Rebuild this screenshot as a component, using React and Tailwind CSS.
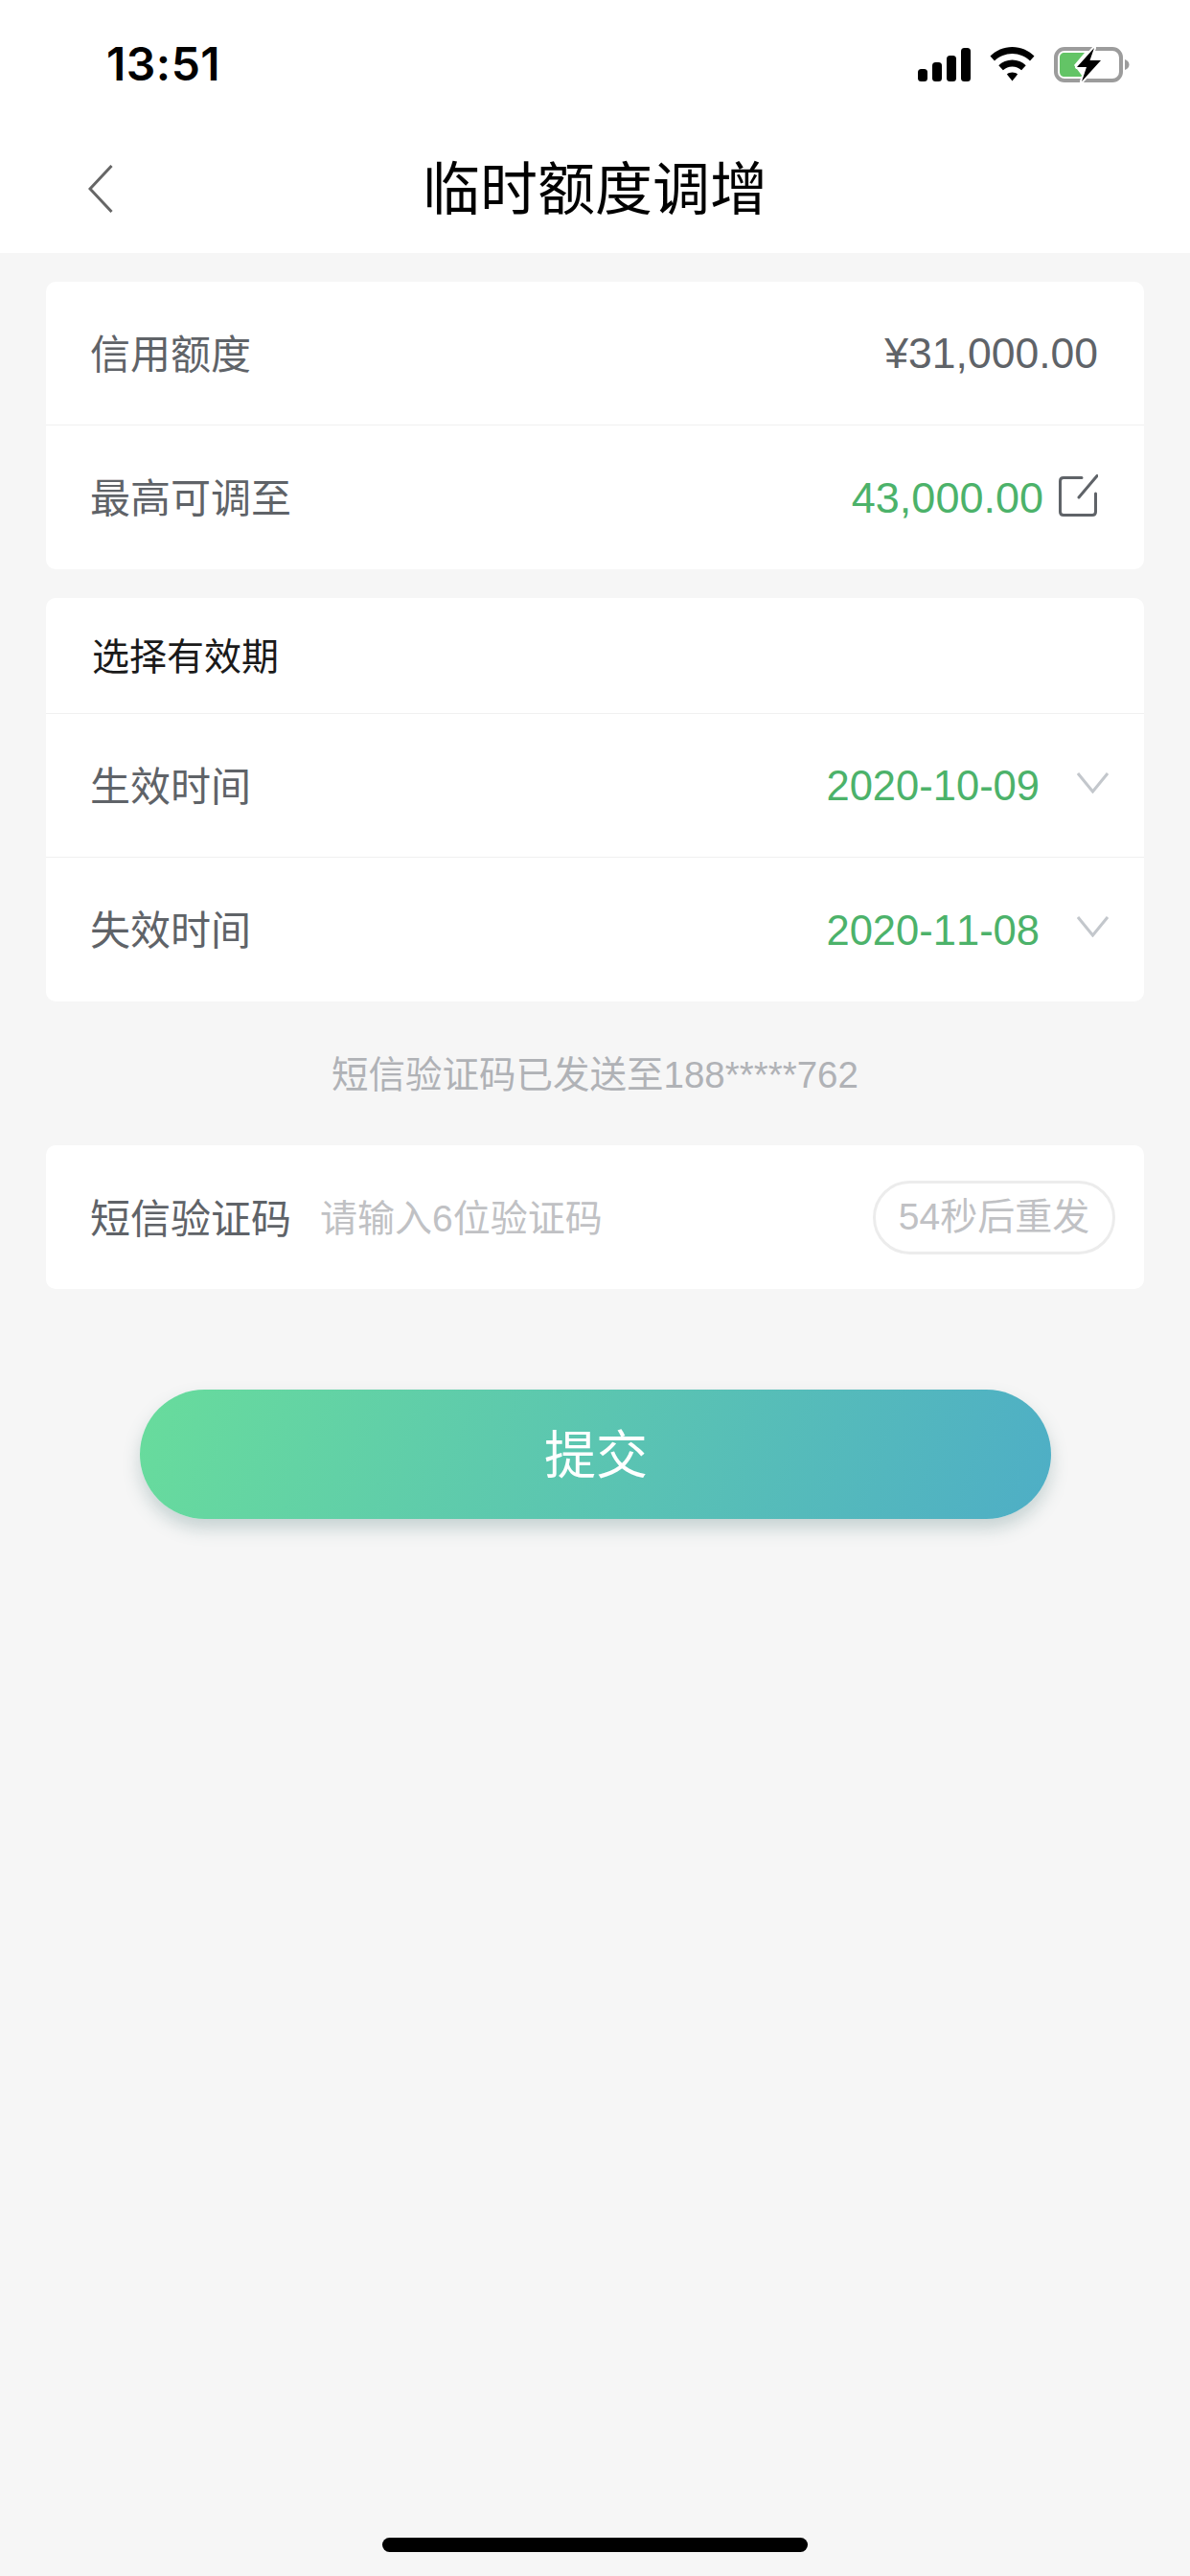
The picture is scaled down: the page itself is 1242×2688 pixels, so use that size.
import React from 'react';

const font = 'font-["Liberation_Sans","Noto_Sans_CJK_SC",sans-serif]';

function SignalIcon() {
  return (
    <svg width="55" height="35" viewBox="0 0 55 35" fill="#000">
      <rect x="0" y="22" width="10" height="13" rx="3.5" />
      <rect x="15" y="15" width="10" height="20" rx="3.5" />
      <rect x="30" y="8" width="10" height="27" rx="3.5" />
      <rect x="45" y="0" width="10" height="35" rx="3.5" />
    </svg>
  );
}

function WifiIcon() {
  return (
    <svg width="47" height="36" viewBox="0 0 47 36" fill="#000">
      <path d="M23.5 0C14.5 0 6.5 3.6 0.5 9.5L5 14.5C10 9.8 16.4 7 23.5 7S37 9.8 42 14.5L46.5 9.5C40.5 3.6 32.5 0 23.5 0Z" />
      <path d="M23.5 13.5C18 13.5 13 15.6 9.3 19.2L13.9 24.2C16.5 21.9 19.8 20.5 23.5 20.5S30.5 21.9 33.1 24.2L37.7 19.2C34 15.6 29 13.5 23.5 13.5Z" />
      <path d="M23.5 26.5C21.3 26.5 19.4 27.2 17.9 28.4L23.5 35.5L29.1 28.4C27.6 27.2 25.7 26.5 23.5 26.5Z" />
    </svg>
  );
}

function BatteryIcon() {
  return (
    <svg width="79" height="37" viewBox="0 0 79 37">
      <rect x="2" y="2" width="68" height="33" rx="9" fill="none" stroke="#9c9c9c" strokeWidth="4" />
      <path d="M74 13C77 14 78.500 16 78.500 18.500S77 23 74 24Z" fill="#9c9c9c" />
      <path d="M11 6H32L21 19L30 31H11C8 31 6 29 6 26V11C6 8 8 6 11 6Z" fill="#63c466" />
      <path d="M42 1L24 21H34L29 36L49 14H37.500Z" fill="#000" stroke="#fff" strokeWidth="4" paintOrder="stroke" strokeLinejoin="round" />
    </svg>
  );
}

function BackIcon() {
  return (
    <svg width="26" height="50" viewBox="0 0 26 50" fill="none" stroke="#666" strokeWidth="3">
      <path d="M24.500 1L2 25L24.500 49" />
    </svg>
  );
}

function EditIcon() {
  return (
    <svg width="41" height="44" viewBox="0 0 41 44" fill="none" stroke="#5f6368" strokeWidth="3" strokeLinecap="round">
      <path d="M24 3.500H5C2.800 3.500 1.500 4.800 1.500 7V39C1.500 41.200 2.800 42.500 5 42.500H35C37.200 42.500 38.500 41.200 38.500 39V20" />
      <path d="M21 24L40 1.500" />
    </svg>
  );
}

function ChevronDown() {
  return (
    <svg width="33" height="22" viewBox="0 0 33 22" fill="none" stroke="#c3c7cc" strokeWidth="3">
      <path d="M1 1L16.500 20L32 1" />
    </svg>
  );
}

function Row({ label, children, border = true }) {
  return (
    <div className={`flex h-[150px] items-center justify-between pl-[46px] ${border ? 'border-b border-[#f0f0f0]' : ''}`}>
      <span className="pt-[3px] text-[42px] text-[#5f6368]">{label}</span>
      {children}
    </div>
  );
}

function DateRow({ label, value, border }) {
  return (
    <Row label={label} border={border}>
      <div className="flex items-center">
        <span className="pt-[3px] text-[43.5px] text-[#4cb26a] [font-kerning:none]">{value}</span>
        <span className="mb-[6px] ml-[39px] mr-[37px] flex">
          <ChevronDown />
        </span>
      </div>
    </Row>
  );
}

export default function App() {
  return (
    <div className={`flex min-h-[2688px] flex-col bg-[#f6f6f6] ${font}`}>
      <div className="bg-white">
        <div className="flex h-[134px] items-center justify-between pl-[111px] pr-[63px]">
          <span className="font-['Inter'] text-[48px] font-semibold leading-none tracking-[0.5px] text-black">13:51</span>
          <div className="flex items-center">
            <SignalIcon />
            <span className="ml-[20px] flex">
              <WifiIcon />
            </span>
            <span className="ml-[20px] flex">
              <BatteryIcon />
            </span>
          </div>
        </div>
        <div className="relative flex h-[130px] items-center justify-center">
          <span className="absolute left-[92px] top-[38px] flex">
            <BackIcon />
          </span>
          <h1 className="text-[60px] font-normal leading-none text-black">临时额度调增</h1>
        </div>
      </div>

      <div className="flex flex-col px-[48px] pt-[30px]">
        <div className="overflow-hidden rounded-[10px] bg-white">
          <Row label="信用额度">
            <span className="mr-[48px] pt-[1px] text-[44.5px] text-[#5f6368]">¥31,000.00</span>
          </Row>
          <Row label="最高可调至" border={false}>
            <div className="mr-[48px] flex items-center">
              <span className="pt-[2px] text-[45px] text-[#4cb26a]">43,000.00</span>
              <span className="mb-[4px] ml-[16px] flex">
                <EditIcon />
              </span>
            </div>
          </Row>
        </div>

        <div className="mt-[30px] overflow-hidden rounded-[10px] bg-white">
          <div className="flex h-[121px] items-center border-b border-[#f0f0f0] pl-[48px] pt-[4px] text-[39px] text-[#1a1a1a]">
            选择有效期
          </div>
          <DateRow label="生效时间" value="2020-10-09" />
          <DateRow label="失效时间" value="2020-11-08" border={false} />
        </div>

        <p className="flex h-[150px] items-center justify-center pt-[4px] text-[38.5px] text-[#b0b2b6]">
          短信验证码已发送至188*****762
        </p>

        <div className="flex h-[150px] items-center justify-between rounded-[10px] bg-white pl-[46px] pr-[30px]">
          <div className="flex items-center pt-[4px]">
            <span className="text-[42px] text-[#5f6368]">短信验证码</span>
            <span className="ml-[30px] text-[39px] text-[#c0c1c4]">请输入6位验证码</span>
          </div>
          <span className="flex h-[77px] w-[253px] items-center justify-center rounded-full border-[3px] border-[#ececec] pt-[1px] text-[39px] text-[#c0c1c4]">
            54秒后重发
          </span>
        </div>

        <button className="mx-auto mt-[105px] flex h-[135px] w-[951px] items-center justify-center rounded-full bg-[linear-gradient(110deg,#68dc9c,#4eaec6)] pl-[2px] pt-[3px] text-[54px] text-white shadow-[0_10px_18px_rgba(90,130,130,0.3)]">
          提交
        </button>
      </div>

      <div className="mt-auto flex justify-center pb-[25px]">
        <div className="h-[15px] w-[444px] rounded-full bg-black" />
      </div>
    </div>
  );
}
